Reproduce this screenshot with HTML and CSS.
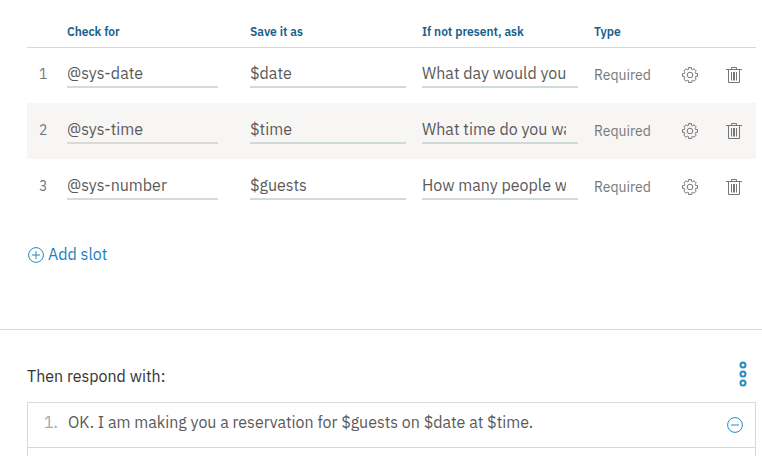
FILE: index.html
```html
<!DOCTYPE html>
<html lang="en">
<head>
<meta charset="utf-8">
<title>Slots</title>
<link rel="stylesheet" href="styles.css">
</head>
<body>
<svg class="defs" width="0" height="0" aria-hidden="true">
  <symbol id="gear" viewBox="0 0 16 16">
    <path d="M6.6.5h2.8v1.7l1.4.6L12 1.7l2.3 2.3-1.2 1.2.6 1.4h1.8v2.8h-1.8l-.6 1.4 1.2 1.2-2.3 2.3-1.2-1.2-1.1.6v1.8H6.6v-1.8l-1.4-.6L4 14.3 1.7 12l1.2-1.2-.6-1.4H.5V6.6h1.8l.6-1.4L1.7 4 4 1.7l1.2 1.2 1.4-.7z"/>
    <circle cx="8" cy="8" r="2.8"/>
  </symbol>
  <symbol id="trash" viewBox="0 0 16 16">
    <path d="M0 2.5h16M5.5 2.5v-2h5v2M2.5 2.5v13h11v-13M5.5 5v8.5M7.5 5v8.5M8.5 5v8.5M10.5 5v8.5"/>
  </symbol>
</svg>
<section class="slots">
  <div class="row head"><span></span><span>Check for</span><span>Save it as</span><span>If not present, ask</span><span>Type</span></div>
  <div class="row">
    <span class="num">1</span><div class="field entity">@sys-date</div><div class="field">$date</div>
    <div class="field ask"><span>What day would you</span></div><span class="type">Required</span>
    <svg class="icon"><use href="#gear"/></svg><svg class="icon"><use href="#trash"/></svg>
  </div>
  <div class="row shaded">
    <span class="num">2</span><div class="field entity">@sys-time</div><div class="field">$time</div>
    <div class="field ask"><span>What time do you want</span></div><span class="type">Required</span>
    <svg class="icon"><use href="#gear"/></svg><svg class="icon"><use href="#trash"/></svg>
  </div>
  <div class="row">
    <span class="num">3</span><div class="field entity">@sys-number</div><div class="field">$guests</div>
    <div class="field ask"><span>How many people will</span></div><span class="type">Required</span>
    <svg class="icon"><use href="#gear"/></svg><svg class="icon"><use href="#trash"/></svg>
  </div>
  <div class="add">
    <svg class="round" viewBox="0 0 16 16"><circle cx="8" cy="8" r="7.4"/><path d="M4 8h8M8 4v8"/></svg>
    <span>Add slot</span>
  </div>
</section>
<section class="respond">
  <div class="title"><span>Then respond with:</span>
    <svg class="more" viewBox="0 0 8 26"><circle cx="4" cy="4" r="2.5"/><circle cx="4" cy="13" r="2.5"/><circle cx="4" cy="22" r="2.5"/></svg>
  </div>
  <div class="responses">
    <div class="response"><span class="index">1.</span><span class="text">OK. I am making you a reservation for $guests on $date at $time.</span>
      <svg class="round" viewBox="0 0 16 16"><circle cx="8" cy="8" r="7.4"/><path d="M4 8h8"/></svg>
    </div>
  </div>
</section>
</body>
</html>
```

FILE: styles.css
```css
* { box-sizing: border-box; }
body { margin: 0; height: 456px; overflow: hidden; background: #fff; color: #5a5a5a; font: 16px/24px "IBM Plex Sans", Roboto, "Liberation Sans", sans-serif; }
.defs { display: block; }
svg { fill: none; flex: none; }
.slots { height: 330px; padding: 16px 6px 0 27px; border-bottom: 1px solid #d8d8d8; }
.row { display: grid; grid-template-columns: 40px 183px 172px 172px 74px 44px 44px; height: 56px; align-items: center; white-space: nowrap; }
.head { height: 32px; border-bottom: 1px solid #d8d8d8; color: #16608a; font-size: 12px; font-weight: 600; margin-bottom: -1px; }
.shaded { background: #f7f6f5; }
.num { padding: 0 0 2px 12px; font-size: 14px; color: #777677; }
.field { width: 156px; height: 28px; margin-bottom: 3px; border-bottom: 2px solid #cfdbd6; line-height: 26px; }
.entity { width: 151px; border-color: #d9dad3; }
.ask span { display: block; width: 144px; overflow: hidden; }
.type { padding-bottom: 1px; font-size: 14px; color: #777677; }
.icon { justify-self: center; width: 16px; height: 16px; stroke: #777677; }
.add { display: flex; align-items: center; gap: 4px; margin-top: 27px; padding-left: 1px; color: #1b7fbe; }
.round { width: 16px; height: 16px; stroke: #258bc0; }
.add .round { margin-top: 2px; }
.respond { padding: 31px 6px 0 27px; }
.title { display: flex; justify-content: space-between; height: 41px; padding: 3px 9px 0 0; color: #333; }
.more { width: 8px; height: 26px; margin-top: -3px; stroke: #258bc0; stroke-width: 2; }
.responses { height: 54px; border: 1px solid #d8d8d8; border-bottom: 0; }
.response { display: flex; height: 45px; align-items: center; padding: 0 12px 0 16px; border-bottom: 1px solid #d8d8d8; }
.index { width: 24px; padding-bottom: 6px; color: #aaa; }
.text { flex: 1; padding-bottom: 6px; white-space: nowrap; }
```
